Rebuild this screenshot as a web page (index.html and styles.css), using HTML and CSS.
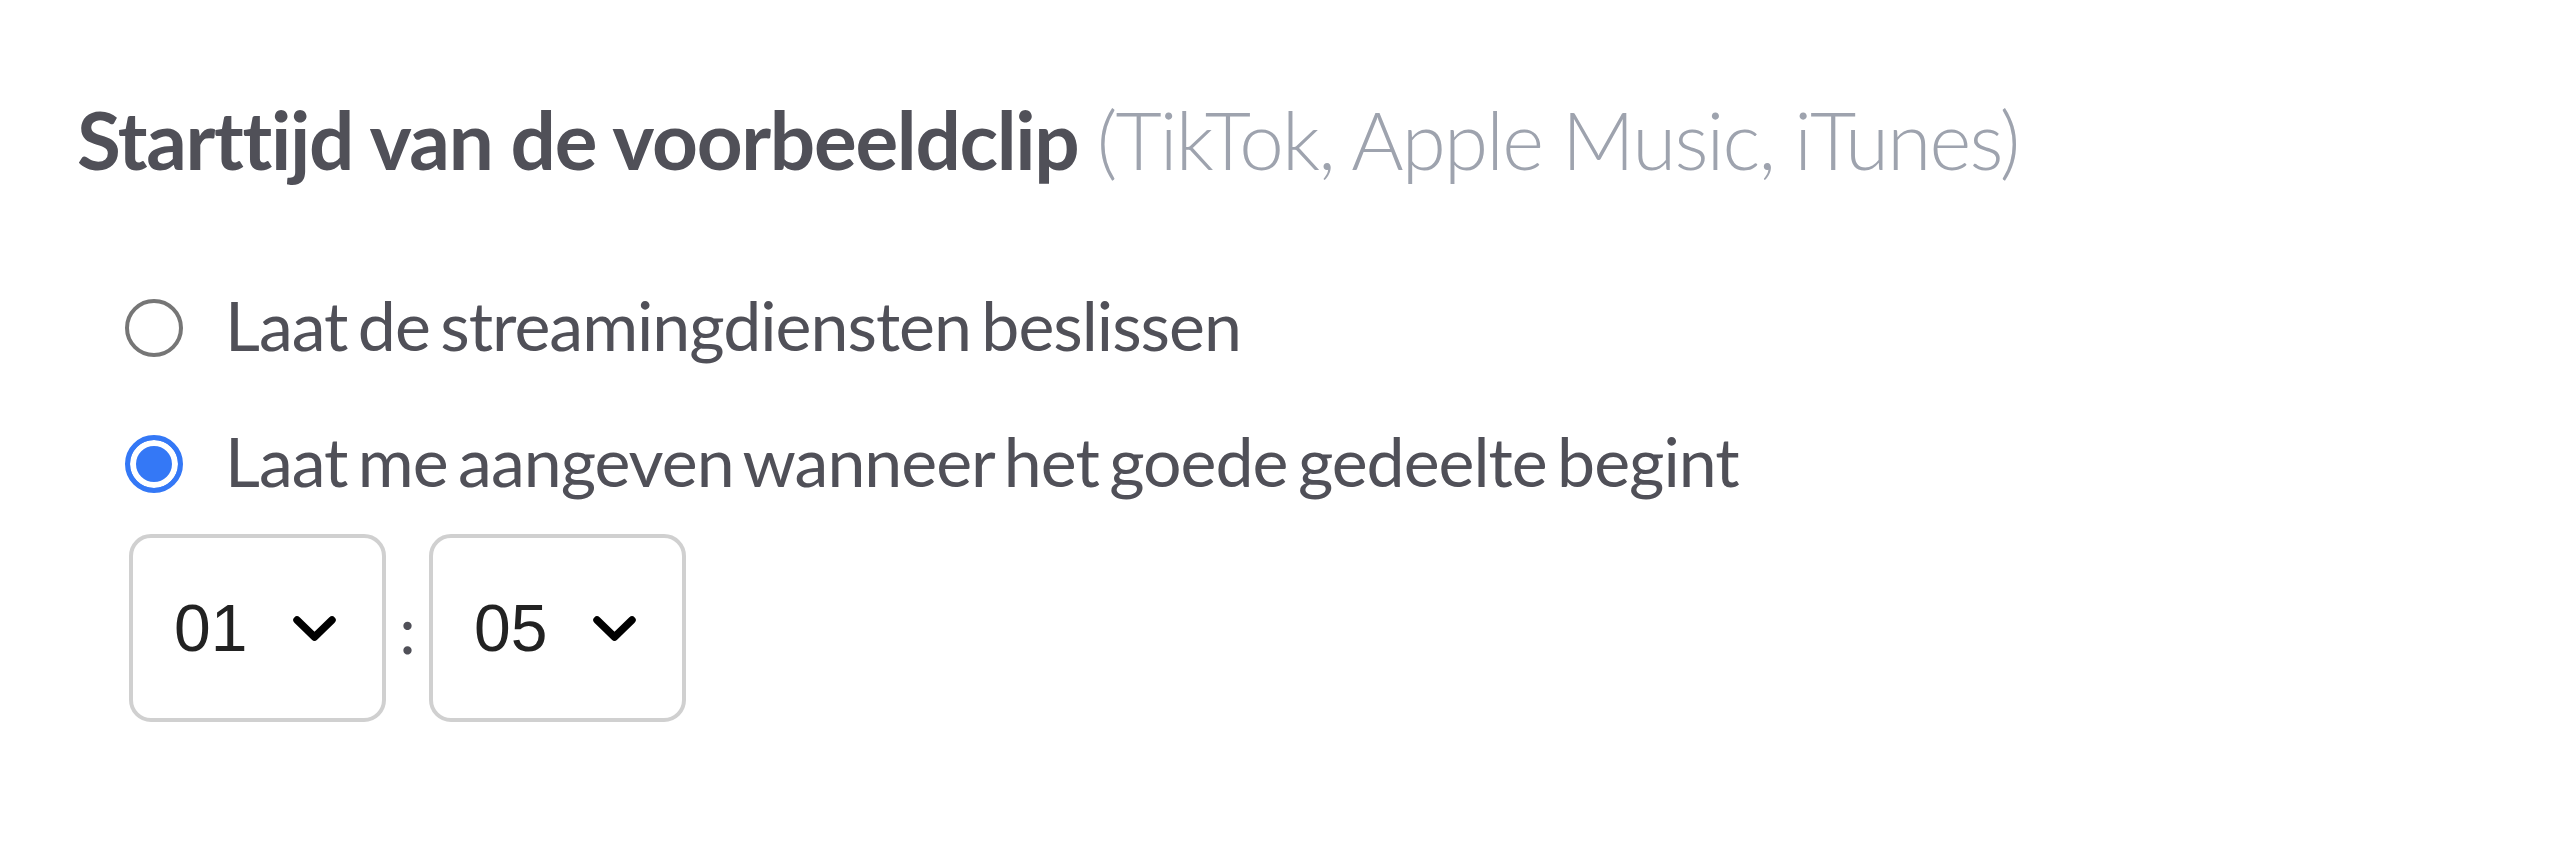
FILE: index.html
```html
<!DOCTYPE html>
<html lang="nl">
<head>
    <meta charset="UTF-8">
    <meta name="viewport" content="width=device-width, initial-scale=1.0">
    <title>Starttijd van de voorbeeldclip</title>
    <link rel="stylesheet" href="styles.css">
</head>
<body>
    <div class="field">
        <h2 class="field-title">Starttijd van de voorbeeldclip <span class="hint">(TikTok, Apple Music, iTunes)</span></h2>

        <div class="options">
            <label class="option">
                <input type="radio" name="clipstart" value="auto">
                Laat de streamingdiensten beslissen
            </label>

            <label class="option">
                <input type="radio" name="clipstart" value="custom" checked>
                Laat me aangeven wanneer het goede gedeelte begint
            </label>

            <div class="time">
                <div class="time-select">
                    <span class="time-value">01</span>
                    <svg class="chevron" viewBox="0 0 43 25" width="43" height="25">
                        <polyline points="4,4 21.5,21 39,4" fill="none" stroke="#000" stroke-width="7.5" stroke-linecap="round" stroke-linejoin="round"/>
                    </svg>
                </div>
                <span class="colon">:</span>
                <div class="time-select">
                    <span class="time-value">05</span>
                    <svg class="chevron" viewBox="0 0 43 25" width="43" height="25">
                        <polyline points="4,4 21.5,21 39,4" fill="none" stroke="#000" stroke-width="7.5" stroke-linecap="round" stroke-linejoin="round"/>
                    </svg>
                </div>
            </div>
        </div>
    </div>
</body>
</html>
```

FILE: styles.css
```css
body {
    margin: 0;
    background: #fff;
    font-family: Lato, "Noto Sans", sans-serif;
    font-variant-ligatures: none;
    color: #505058;
}
.field {
    padding: 91px 0 0 77px;
}
.field-title {
    margin: 0;
    font-size: 80px;
    line-height: 96px;
    font-weight: 700;
    letter-spacing: -1.3px;
    white-space: nowrap;
}
.hint {
    font-weight: 300;
    color: #9ea3ae;
    letter-spacing: -1.8px;
}
.options {
    display: flex;
    flex-direction: column;
    align-items: flex-start;
    gap: 50px;
    margin-top: 95px;
    padding-left: 48px;
}
.option {
    display: flex;
    align-items: center;
    gap: 42px;
    font-size: 68px;
    line-height: 86px;
    letter-spacing: -1px;
    word-spacing: -6px;
    white-space: nowrap;
}
.option input {
    appearance: none;
    -webkit-appearance: none;
    margin: 6px 0 0 0;
    width: 58px;
    height: 58px;
    border: 4px solid #767676;
    border-radius: 50%;
    background: #fff;
    flex-shrink: 0;
}
.option input:checked {
    border: 5px solid #3478f6;
    background: #3478f6;
    box-shadow: inset 0 0 0 6px #fff;
}
.time {
    display: flex;
    align-items: center;
    margin: -20px 0 0 4px;
}
.time-select {
    box-sizing: border-box;
    width: 257px;
    height: 188px;
    display: flex;
    align-items: center;
    gap: 46px;
    padding-left: 41px;
    border: 4px solid #d0d0d0;
    border-radius: 22px;
    background: #fff;
    color: #222;
}
.time-value {
    font-family: "Liberation Sans", Arial, sans-serif;
    font-size: 66px;
    line-height: 1;
}
.chevron {
    display: block;
}
.colon {
    width: 43px;
    text-align: center;
    font-size: 66px;
    color: #505058;
}
```
